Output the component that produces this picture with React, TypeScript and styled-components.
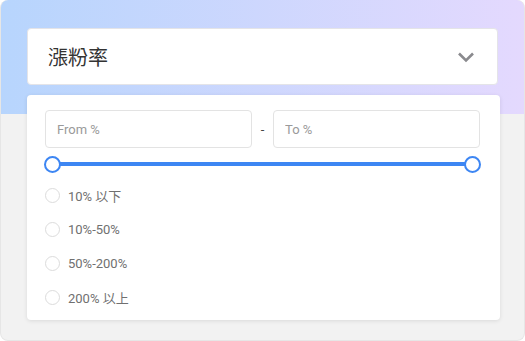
import React from 'react';
import styled, { createGlobalStyle } from 'styled-components';

const Global = createGlobalStyle`
  html, body {
    margin: 0;
    padding: 0;
    background: #ffffff;
  }
  body {
    font-family: Roboto, "Noto Sans CJK TC", sans-serif;
  }
`;

const Frame = styled.div`
  box-sizing: border-box;
  width: 525px;
  height: 341px;
  padding: 28px 0 0 26px;
  border: 1px solid #e6e6e6;
  border-top: none;
  border-radius: 8px;
  overflow: hidden;
  background:
    linear-gradient(to right, #b7d5fd, #e4d9fe) top / 100% 114px no-repeat,
    #f2f2f2;
  display: flex;
  flex-direction: column;
  gap: 10px;
`;

const Select = styled.div`
  box-sizing: border-box;
  width: 471px;
  height: 57px;
  background: #ffffff;
  border: 1px solid #e4e4e8;
  border-radius: 4px;
  display: flex;
  align-items: center;
  justify-content: space-between;
  padding: 0 22px 0 20px;
`;

const SelectLabel = styled.span`
  font-size: 20px;
  color: #333333;
  font-family: "Noto Sans CJK TC", sans-serif;
`;

const Panel = styled.div`
  box-sizing: border-box;
  width: 473px;
  height: 225px;
  background: #ffffff;
  border-radius: 4px;
  box-shadow: 0 1px 4px rgba(0, 0, 0, 0.1);
  padding: 15px 20px 0 18px;
  display: flex;
  flex-direction: column;
`;

const RangeRow = styled.div`
  display: flex;
  align-items: center;
`;

const Input = styled.input`
  box-sizing: border-box;
  width: 207px;
  height: 38px;
  border: 1px solid #e3e3e3;
  border-radius: 4px;
  padding: 0 11px;
  font-family: Roboto, sans-serif;
  font-size: 13px;
  color: #333;
  outline: none;
  &::placeholder {
    color: #9a9a9a;
  }
`;

const Dash = styled.span`
  width: 21px;
  text-align: center;
  font-size: 13px;
  color: #444;
`;

const Slider = styled.div`
  position: relative;
  height: 18px;
  margin: 7px 0 0 -1px;
  width: 437px;
  display: flex;
  align-items: center;
  justify-content: space-between;
`;

const Track = styled.div`
  position: absolute;
  left: 8px;
  right: 8px;
  top: 7px;
  height: 4px;
  background: #3d86f3;
`;

const Thumb = styled.div`
  position: relative;
  box-sizing: border-box;
  width: 17px;
  height: 17px;
  border-radius: 50%;
  border: 2px solid #3d86f3;
  background: #ffffff;
`;

const Options = styled.div`
  display: flex;
  flex-direction: column;
  margin-top: 13px;
  gap: 15px;
`;

const Option = styled.label`
  display: flex;
  align-items: center;
  height: 19px;
  font-size: 13px;
  color: #707070;
  font-family: Roboto, "Noto Sans CJK TC", sans-serif;
`;

const Radio = styled.span`
  box-sizing: border-box;
  width: 15px;
  height: 15px;
  border-radius: 50%;
  border: 1px solid #dcdcdc;
  margin-right: 8px;
`;

const Chevron = () => (
  <svg width="18" height="12" viewBox="0 0 18 12">
    <path d="M2 2.5 L9 9.5 L16 2.5" fill="none" stroke="#8a8a8e" strokeWidth="2.6" />
  </svg>
);

const options = ['10% 以下', '10%-50%', '50%-200%', '200% 以上'];

export default function App() {
  return (
    <>
      <Global />
      <Frame>
        <Select>
          <SelectLabel>漲粉率</SelectLabel>
          <Chevron />
        </Select>
        <Panel>
          <RangeRow>
            <Input placeholder="From %" />
            <Dash>-</Dash>
            <Input placeholder="To %" />
          </RangeRow>
          <Slider>
            <Track />
            <Thumb />
            <Thumb />
          </Slider>
          <Options>
            {options.map((o) => (
              <Option key={o}>
                <Radio />
                {o}
              </Option>
            ))}
          </Options>
        </Panel>
      </Frame>
    </>
  );
}
